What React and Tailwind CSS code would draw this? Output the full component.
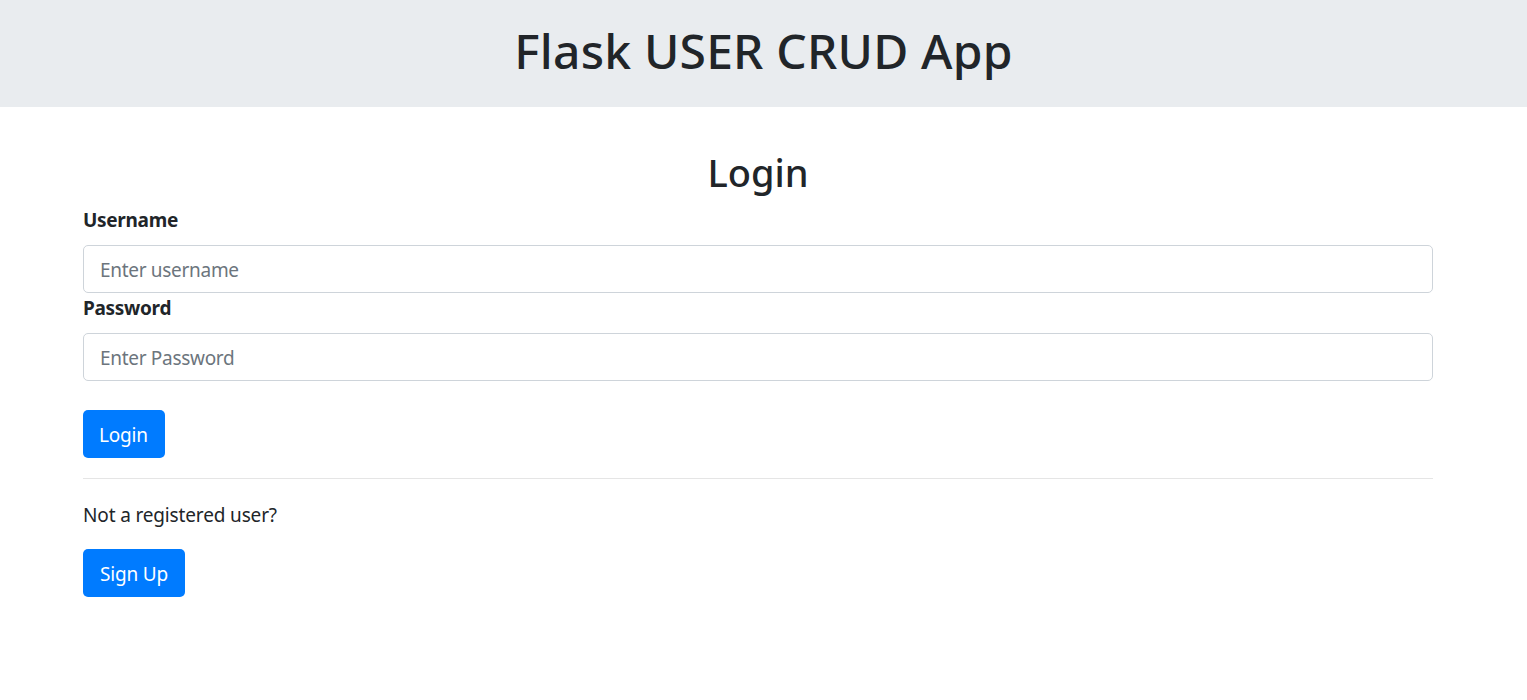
import React from "react";

export default function App() {
  const font = { fontFamily: '"Noto Sans", "Open Sans", sans-serif' };
  return (
    <div className="min-h-[700px] bg-white text-[#212529]" style={font}>
      <header className="h-[107px] bg-[#e9ecef] flex items-center justify-center">
        <h1 className="text-[48px] font-medium leading-[1.2] tracking-[0.2px] -mt-[6px]">Flask USER CRUD App</h1>
      </header>
      <main className="ml-[83px] w-[1350px]">
        <h2 className="mt-[41px] text-center text-[38px] font-medium leading-[48px]">Login</h2>
        <form className="mt-[9px]" onSubmit={(e) => e.preventDefault()}>
          <label className="block text-[19px] font-bold leading-[30px] tracking-[-0.3px] mb-[10px]">Username</label>
          <input
            type="text"
            placeholder="Enter username"
            className="block w-full h-[48px] border border-[#ced4da] rounded-[5px] px-[16px] pt-[2px] text-[19px] tracking-[-0.3px] text-[#495057] placeholder:text-[#6c757d] outline-none"
          />
          <label className="block text-[19px] font-bold leading-[30px] tracking-[-0.3px] mb-[10px]">Password</label>
          <input
            type="password"
            placeholder="Enter Password"
            className="block w-full h-[48px] border border-[#ced4da] rounded-[5px] px-[16px] pt-[2px] text-[19px] tracking-[-0.3px] text-[#495057] placeholder:text-[#6c757d] outline-none"
          />
          <button
            type="submit"
            className="mt-[29px] h-[48px] pl-[16px] pr-[17px] pt-[2px] bg-[#007bff] text-white text-[19px] tracking-[-0.2px] leading-[30px] rounded-[5px]"
          >
            Login
          </button>
        </form>
        <hr className="mt-[20px] mb-[20px] border-0 border-t border-[#e5e5e5]" />
        <p className="text-[19px] leading-[30px] tracking-[-0.15px] mb-[19px] pt-[1px]">Not a registered user?</p>
        <button className="h-[48px] px-[17px] pt-[2px] bg-[#007bff] text-white text-[19px] tracking-[-0.2px] leading-[30px] rounded-[5px]">
          Sign Up
        </button>
      </main>
    </div>
  );
}
